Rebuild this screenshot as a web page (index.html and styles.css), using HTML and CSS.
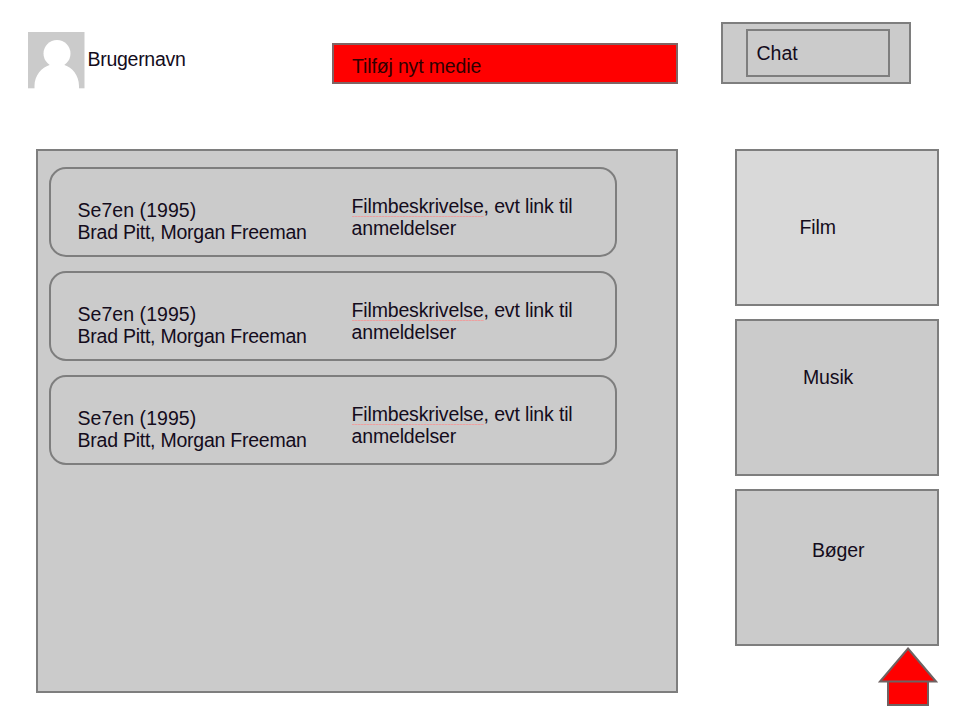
FILE: index.html
```html
<!DOCTYPE html>
<html lang="da">
<head>
<meta charset="utf-8">
<title>Medier</title>
<link rel="stylesheet" href="styles.css">
</head>
<body>
<header class="top">
  <div class="user">
    <svg class="avatar" viewBox="0 0 57 57" width="57" height="57">
      <rect width="56.500" height="56.3" fill="#cbcbcb"/>
      <circle cx="29" cy="21.5" r="13.5" fill="#fff"/>
      <path d="M6.500 57V54C6.500 43 14 35.500 21.500 33L23 29H35L36.500 33C44 35.500 51 43 51 54V57Z" fill="#fff"/>
    </svg>
    <span class="username">Brugernavn</span>
  </div>
  <a class="add">Tilføj nyt medie</a>
  <div class="chat"><div class="chat-label">Chat</div></div>
</header>
<main class="main">
  <section class="list">
    <article class="card">
      <div class="title"><span class="name">Se7en (1995)</span><br>Brad Pitt, Morgan Freeman</div>
      <div class="desc"><span class="spell">Filmbeskrivelse</span>, evt link til<br>anmeldelser</div>
    </article>
    <article class="card">
      <div class="title"><span class="name">Se7en (1995)</span><br>Brad Pitt, Morgan Freeman</div>
      <div class="desc"><span class="spell">Filmbeskrivelse</span>, evt link til<br>anmeldelser</div>
    </article>
    <article class="card">
      <div class="title"><span class="name">Se7en (1995)</span><br>Brad Pitt, Morgan Freeman</div>
      <div class="desc"><span class="spell">Filmbeskrivelse</span>, evt link til<br>anmeldelser</div>
    </article>
  </section>
  <nav class="side">
    <a class="tile film">Film</a>
    <a class="tile musik">Musik</a>
    <a class="tile boger">Bøger</a>
    <svg class="arrow" viewBox="0 0 62 62" width="62" height="62">
      <g fill="#f00" stroke="#6e6262" stroke-width="2">
        <rect x="12" y="35" width="40" height="24"/>
        <path d="M32 2.500L60 35.500H4Z"/>
      </g>
    </svg>
  </nav>
</main>
</body>
</html>
```
FILE: styles.css
```css
* { box-sizing: border-box; }
body {
  margin: 0;
  width: 960px;
  height: 720px;
  overflow: hidden;
  background: #fff;
  color: #140c1c;
  font: 19.5px/22px "Liberation Sans", Arial, sans-serif;
  letter-spacing: -0.15px;
  white-space: nowrap;
}
.top {
  display: flex;
  align-items: flex-start;
  height: 149px;
  padding: 22px 0 0 28px;
}
.user {
  display: flex;
  width: 304px;
  padding-top: 10px;
}
.avatar { display: block; }
.username {
  padding: 16px 0 0 2.5px;
  letter-spacing: -0.28px;
}
.add {
  width: 346px;
  height: 41px;
  margin-top: 21px;
  padding: 10px 0 0 18px;
  border: 2px solid #806464;
  background: #f00;
  color: #300000;
}
.chat {
  width: 190px;
  height: 62px;
  margin-left: 43px;
  padding: 5px 0 0 23px;
  border: 2px solid #7e7e7e;
  background: #cbcbcb;
}
.chat-label {
  width: 144px;
  height: 48px;
  padding: 11px 0 0 8.5px;
  border: 2px solid #7e7e7e;
  letter-spacing: 0;
}
.main {
  display: flex;
  gap: 57px;
  padding-left: 36px;
}
.list {
  display: flex;
  flex-direction: column;
  gap: 14px;
  width: 642px;
  height: 544px;
  padding: 16px 11px;
  border: 2px solid #7e7e7e;
  background: #cbcbcb;
}
.card {
  display: flex;
  width: 568px;
  height: 90px;
  border: 2px solid #7e7e7e;
  border-radius: 17px;
}
.title {
  width: 274px;
  padding: 30px 0 0 26.5px;
  letter-spacing: -0.24px;
}
.name { letter-spacing: 0.05px; }
.desc { padding: 26px 0 0 26.5px; }
.spell {
  background: repeating-linear-gradient(90deg, #eda0a0 0 2px, #dfb0b0 2px 3px) left bottom / 100% 1px no-repeat;
}
.side {
  display: flex;
  flex-direction: column;
  gap: 13px;
  width: 204px;
}
.tile {
  height: 157px;
  border: 2px solid #7e7e7e;
  background: #cbcbcb;
}
.film {
  padding: 65px 0 0 62.5px;
  background: #d9d9d9;
}
.musik { padding: 45px 0 0 66px; }
.boger { padding: 48px 0 0 75px; }
.arrow {
  align-self: flex-end;
  margin: -13px 1px 0 0;
}
```
